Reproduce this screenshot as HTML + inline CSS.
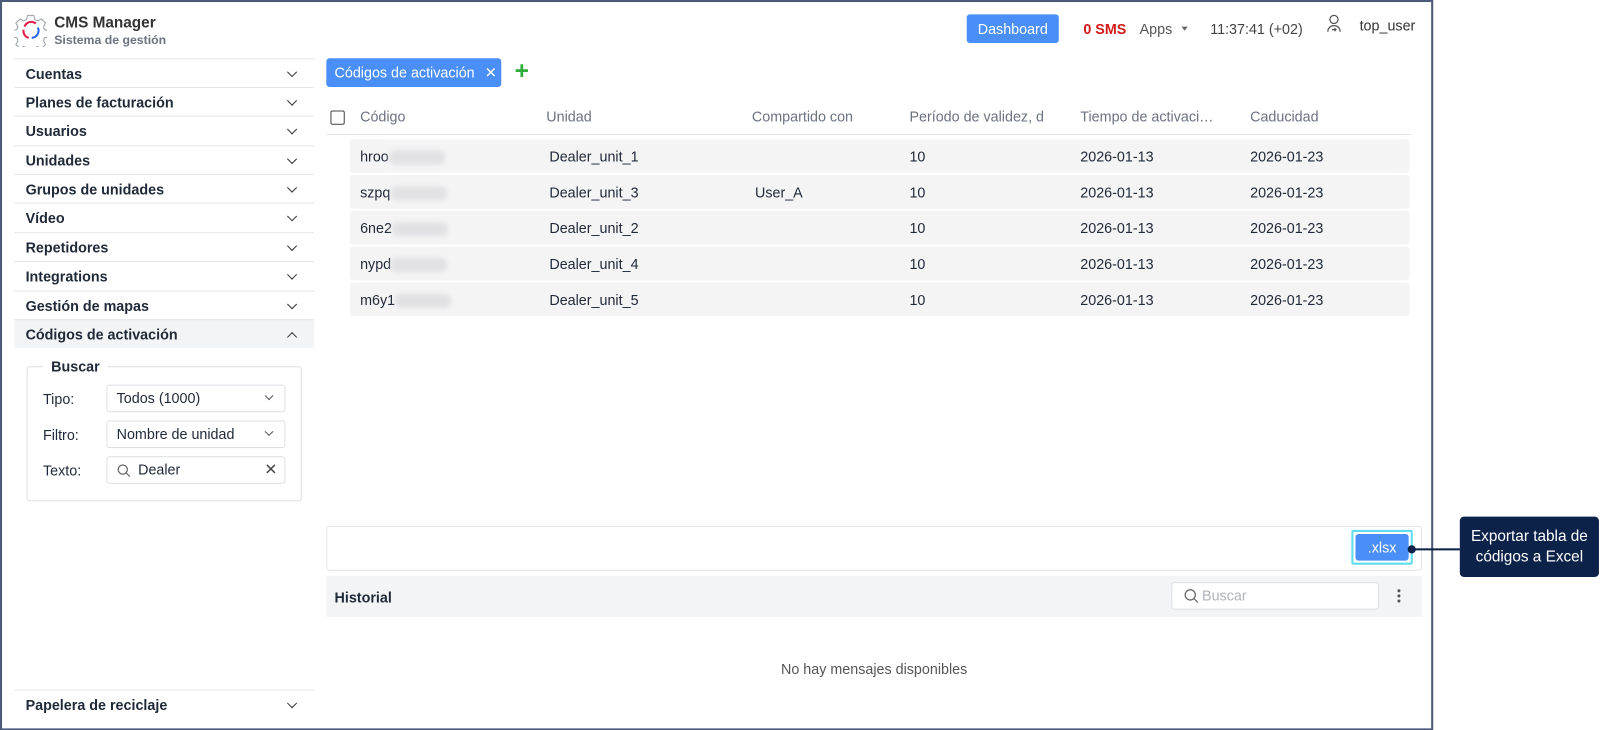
<!DOCTYPE html>
<html><head><meta charset="utf-8"><style>
*{box-sizing:border-box;margin:0;padding:0}
body{width:1604px;height:730px;background:#fff;font-family:"Liberation Sans",sans-serif;font-size:14px;color:#1f2937;position:relative;overflow:hidden}
#w{position:absolute;left:0;top:0;width:1568px;height:714px;transform:scale(1.023);transform-origin:0 0}
.frame{position:absolute;left:0;top:0;width:1401px;height:714px;border:2px solid #4b5a78}
.abs{position:absolute}
.side-item{position:absolute;left:14px;width:293px;height:28px;border-top:1px solid #e3e5e8;font-weight:bold;font-size:14px;color:#1f2937;padding-left:11px;line-height:28px}
.chev{position:absolute;right:18px;top:9px;width:7px;height:7px;border-right:1.8px solid #333;border-bottom:1.8px solid #333;transform:rotate(45deg)}
.chev.up{transform:rotate(-135deg);top:13px}
.hd{position:absolute;top:106px;color:#6b7280;font-size:14px}
.row{position:absolute;left:342px;width:1036px;height:33px;background:#f4f4f5;border-radius:3px}
.row span{position:absolute;top:9px;font-size:14px;color:#1f2937}
.blur{display:inline-block;width:55px;height:14px;background:#e2e2e4;border-radius:6px;filter:blur(2px);vertical-align:middle}
.sel{position:absolute;left:104px;width:175px;height:27px;border:1px solid #dcdfe3;border-radius:3px;padding-left:9px;line-height:25px;font-size:14px}
.sel .chev{right:12px;top:7px;width:6px;height:6px;border-width:1.3px;border-color:#555}
.lbl{position:absolute;left:42px;font-size:14px;color:#1f2937}
</style></head><body><div id="w">
<div class="frame"></div>
<svg class="abs" style="left:14px;top:12px" width="32" height="34" viewBox="0 0 32 34">
<path d="M13 3h6l1 4 3 1.5 3.5-2 4 4-2 3.5 1 3 4 1v6l-4 1-1 3 2 3.5-4 4-3.5-2-3 1-1 4h-6l-1-4-3-1-3.5 2-4-4 2-3.5-1-3-4-1v-6l4-1 1-3-2-3.5 4-4 3.5 2 3-1.5z" fill="none" stroke="#9aa0a8" stroke-width="1"/>
<path d="M10 14a7 7 0 0 1 11-3" stroke="#e11d48" stroke-width="2" fill="none"/>
<path d="M23 15a7 7 0 0 1-6 10" stroke="#2563eb" stroke-width="2" fill="none"/>
<path d="M14 25a7 7 0 0 1-5-8" stroke="#e11d48" stroke-width="2" fill="none"/>
</svg>
<div class="abs" style="left:53px;top:14px;font-weight:bold;font-size:15px;color:#333">CMS Manager</div>
<div class="abs" style="left:53px;top:32px;font-weight:bold;font-size:12px;color:#6b7280">Sistema de gestión</div>
<div class="abs" style="left:945px;top:14px;width:90px;height:28px;background:#4a8ef8;border-radius:3px;color:#fff;text-align:center;line-height:28px;font-size:14px">Dashboard</div>
<div class="abs" style="left:1059px;top:20px;color:#d41a1a;font-weight:bold;font-size:14px">0 SMS</div>
<div class="abs" style="left:1114px;top:20px;color:#555;font-size:14px">Apps</div>
<div class="abs" style="left:1155px;top:26px;width:0;height:0;border-left:3px solid transparent;border-right:3px solid transparent;border-top:4px solid #666"></div>
<div class="abs" style="left:1183px;top:20px;color:#444;font-size:14px">11:37:41 (+02)</div>
<svg class="abs" style="left:1296px;top:13px" width="16" height="20" viewBox="0 0 16 20"><circle cx="8" cy="6" r="4" fill="none" stroke="#555" stroke-width="1.2"/><path d="M2 18c0-4 3-6 6-6s6 2 6 6M6 16h4m-1.5-1.5L10 16l-1.5 1.5" fill="none" stroke="#555" stroke-width="1.2"/></svg>
<div class="abs" style="left:1329px;top:17px;color:#333;font-size:14px">top_user</div>
<div class="side-item" style="top:57px">Cuentas<i class="chev"></i></div>
<div class="side-item" style="top:85px">Planes de facturación<i class="chev"></i></div>
<div class="side-item" style="top:113px">Usuarios<i class="chev"></i></div>
<div class="side-item" style="top:142px">Unidades<i class="chev"></i></div>
<div class="side-item" style="top:170px">Grupos de unidades<i class="chev"></i></div>
<div class="side-item" style="top:198px">Vídeo<i class="chev"></i></div>
<div class="side-item" style="top:227px">Repetidores<i class="chev"></i></div>
<div class="side-item" style="top:255px">Integrations<i class="chev"></i></div>
<div class="side-item" style="top:284px">Gestión de mapas<i class="chev"></i></div>
<div class="side-item" style="top:312px;background:#f3f4f6">Códigos de activación<i class="chev up"></i></div>
<div class="abs" style="left:26px;top:358px;width:269px;height:132px;border:1px solid #dcdfe3;border-radius:3px"></div>
<div class="abs" style="left:42px;top:350px;background:#fff;padding:0 8px;font-weight:bold;font-size:14px">Buscar</div>
<div class="lbl" style="top:382px">Tipo:</div>
<div class="lbl" style="top:417px">Filtro:</div>
<div class="lbl" style="top:452px">Texto:</div>
<div class="sel" style="top:376px">Todos (1000)<i class="chev"></i></div>
<div class="sel" style="top:411px">Nombre de unidad<i class="chev"></i></div>
<div class="sel" style="top:446px;padding-left:30px">Dealer
<svg class="abs" style="left:9px;top:6px" width="14" height="14" viewBox="0 0 14 14"><circle cx="6" cy="6" r="4.5" fill="none" stroke="#666" stroke-width="1.2"/><path d="M9.3 9.3l3.5 3.5" stroke="#666" stroke-width="1.2"/></svg>
<span class="abs" style="right:7px;top:0;color:#444;font-size:15px">✕</span></div>
<div class="side-item" style="top:674px">Papelera de reciclaje<i class="chev"></i></div>
<div class="abs" style="left:319px;top:57px;width:171px;height:28px;background:#4a8ef8;border-radius:3px;color:#fff;line-height:28px;padding-left:8px;font-size:14px">Códigos de activación <span style="margin-left:6px">✕</span></div>
<div class="abs" style="left:503px;top:56px;color:#2fae3c;font-size:24px;font-weight:bold;line-height:28px">+</div>
<div class="abs" style="left:323px;top:108px;width:14px;height:14px;border:1.3px solid #444;border-radius:2px"></div>
<div class="hd" style="left:352px">Código</div>
<div class="hd" style="left:534px">Unidad</div>
<div class="hd" style="left:735px">Compartido con</div>
<div class="hd" style="left:889px">Período de validez, d</div>
<div class="hd" style="left:1056px">Tiempo de activaci…</div>
<div class="hd" style="left:1222px">Caducidad</div>
<div class="abs" style="left:319px;top:131px;width:1060px;height:1px;background:#e3e5e8"></div>
<div class="row" style="top:136px"><span style="left:10px">hroo<i class="blur"></i></span><span style="left:195px">Dealer_unit_1</span><span style="left:547px">10</span><span style="left:714px">2026-01-13</span><span style="left:880px">2026-01-23</span></div>
<div class="row" style="top:171px"><span style="left:10px">szpq<i class="blur"></i></span><span style="left:195px">Dealer_unit_3</span><span style="left:396px">User_A</span><span style="left:547px">10</span><span style="left:714px">2026-01-13</span><span style="left:880px">2026-01-23</span></div>
<div class="row" style="top:206px"><span style="left:10px">6ne2<i class="blur"></i></span><span style="left:195px">Dealer_unit_2</span><span style="left:547px">10</span><span style="left:714px">2026-01-13</span><span style="left:880px">2026-01-23</span></div>
<div class="row" style="top:241px"><span style="left:10px">nypd<i class="blur"></i></span><span style="left:195px">Dealer_unit_4</span><span style="left:547px">10</span><span style="left:714px">2026-01-13</span><span style="left:880px">2026-01-23</span></div>
<div class="row" style="top:276px"><span style="left:10px">m6y1<i class="blur"></i></span><span style="left:195px">Dealer_unit_5</span><span style="left:547px">10</span><span style="left:714px">2026-01-13</span><span style="left:880px">2026-01-23</span></div>
<div class="abs" style="left:319px;top:514px;width:1071px;height:44px;border:1px solid #e3e5e8;border-radius:3px"></div>
<div class="abs" style="left:1321px;top:518px;width:60px;height:34px;border:2px solid #5fdcf0;border-radius:2px"></div>
<div class="abs" style="left:1325px;top:522px;width:52px;height:26px;background:#4a8ef8;border-radius:3px;color:#fff;text-align:center;line-height:26px;font-size:14px">.xlsx</div>
<div class="abs" style="left:1380px;top:536px;width:47px;height:2px;background:#0d2249"></div>
<div class="abs" style="left:1376px;top:533px;width:8px;height:8px;border-radius:50%;background:#0d2249"></div>
<div class="abs" style="left:1427px;top:505px;width:136px;height:59px;background:#0d2249;border-radius:4px;color:#fff;text-align:center;font-size:15px;line-height:20px;padding-top:10px">Exportar tabla de<br>códigos a Excel</div>
<div class="abs" style="left:319px;top:563px;width:1071px;height:40px;background:#f3f4f6"></div>
<div class="abs" style="left:327px;top:576px;font-weight:bold;font-size:14px;color:#1f2937">Historial</div>
<div class="abs" style="left:1145px;top:569px;width:203px;height:27px;background:#fff;border:1px solid #dcdfe3;border-radius:3px;color:#b0b4ba;line-height:25px;padding-left:29px;font-size:14px">Buscar
<svg class="abs" style="left:11px;top:5px" width="15" height="15" viewBox="0 0 15 15"><circle cx="6.5" cy="6.5" r="5" fill="none" stroke="#666" stroke-width="1.2"/><path d="M10 10l4 4" stroke="#666" stroke-width="1.2"/></svg></div>
<div class="abs" style="left:1366px;top:576px;width:3px;height:3px;background:#555;border-radius:50%;box-shadow:0 5px #555,0 10px #555"></div>
<div class="abs" style="left:319px;top:646px;width:1071px;text-align:center;color:#555;font-size:14px">No hay mensajes disponibles</div>
</div></body></html>
